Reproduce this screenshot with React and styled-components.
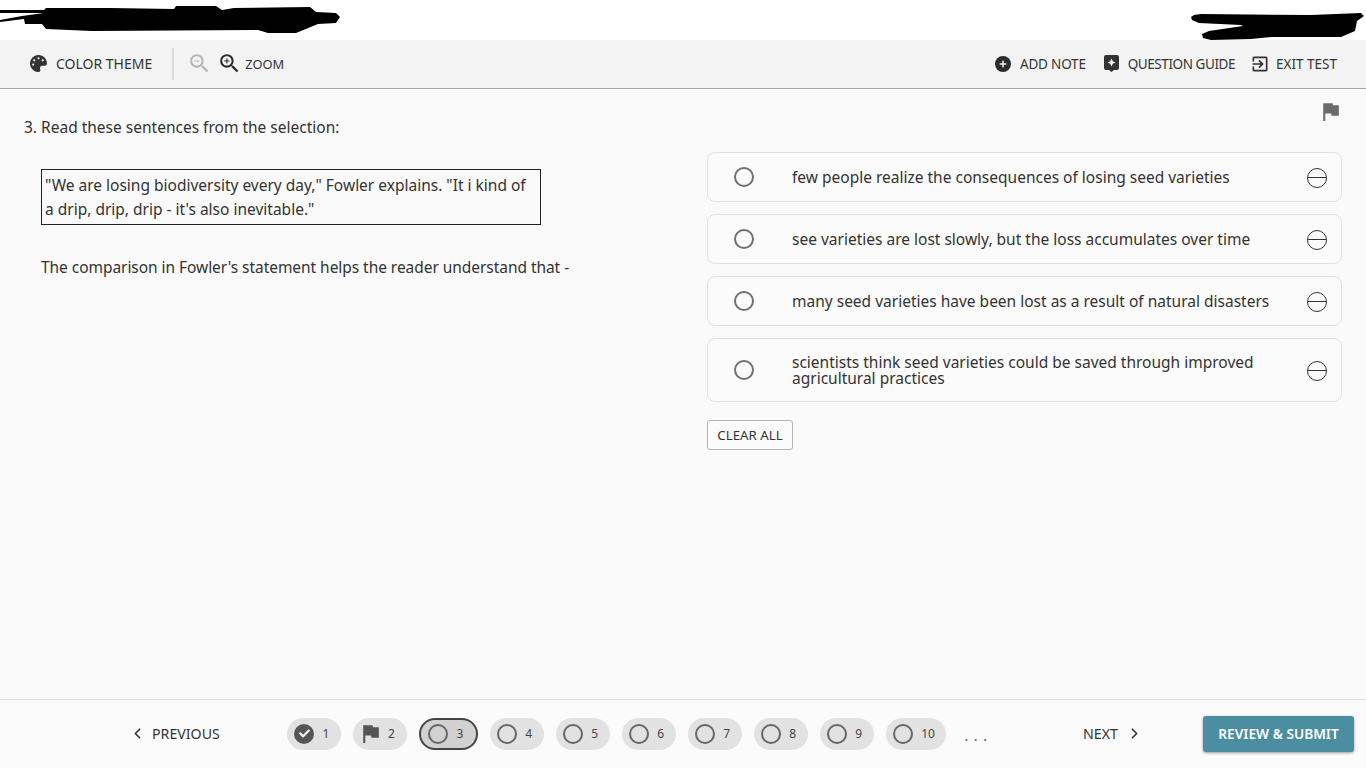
import React from "react";
import styled, { createGlobalStyle } from "styled-components";
import { FaPalette, FaCheck, FaPlus } from "react-icons/fa";
import { MdFlag, MdZoomOut, MdZoomIn, MdOutlineExitToApp } from "react-icons/md";
import { LuChevronLeft, LuChevronRight } from "react-icons/lu";

const GlobalStyle = createGlobalStyle`
	* {
		box-sizing: border-box;
	}
	html, body {
		margin: 0;
		padding: 0;
		background: #fafafa;
		color: #333;
		font-family: "Noto Sans", "Open Sans", sans-serif;
	}
`;

const options = [
	"few people realize the consequences of losing seed varieties",
	"see varieties are lost slowly, but the loss accumulates over time",
	"many seed varieties have been lost as a result of natural disasters",
	"scientists think seed varieties could be saved through improved agricultural practices",
];

const steps = [
	{ n: 1, state: "done" },
	{ n: 2, state: "flag" },
	{ n: 3, state: "current" },
	{ n: 4 },
	{ n: 5 },
	{ n: 6 },
	{ n: 7 },
	{ n: 8 },
	{ n: 9 },
	{ n: 10 },
];

const Scribble = ({ width, height, d }) => (
	<svg width={width} height={height} viewBox={`0 0 ${width} ${height}`} aria-hidden='true'>
		<path d={d} fill='#000' />
	</svg>
);

const App = () => {
	return (
		<Page>
			<GlobalStyle />
			<Header>
				<Scribble
					width={342}
					height={34}
					d='M0 10 L44 10 L46 8 L110 8 L174 9 L176 6 L216 6 L222 10 L234 8 L310 7 L316 12 L336 13 L340 17 L336 23 L318 24 L296 33 L268 33 L258 30 L92 31 L46 29 L42 24 L25 24 L24 19 L0 22 L0 20 L22 16 L44 13 L0 13 Z'
				/>
				<Scribble
					width={173}
					height={40}
					d='M3 15 L10 14 L120 15 L170 13 L173 16 L166 21 L164 31 L150 37 L80 37 L60 39 L20 40 L12 38 L11 34 L18 31 L52 26 L50 25 L8 23 L1 20 L0 17 Z'
				/>
			</Header>
			<Toolbar>
				<ToolGroup>
					<ToolButton>
						<FaPalette size={17} />
						<ToolLabel $size='14px'>COLOR THEME</ToolLabel>
					</ToolButton>
					<Divider />
					<ZoomIcon $muted>
						<MdZoomOut size={25} />
					</ZoomIcon>
					<ZoomIcon>
						<MdZoomIn size={25} />
					</ZoomIcon>
					<ToolLabel $size='12.8px'>ZOOM</ToolLabel>
				</ToolGroup>
				<ToolGroup>
					<ToolButton>
						<RoundIcon>
							<FaPlus size={8} />
						</RoundIcon>
						<ToolLabel $spacing='-0.2px'>ADD NOTE</ToolLabel>
					</ToolButton>
					<ToolButton $left='18px'>
						<svg width='15' height='17' viewBox='0 0 15 17' aria-hidden='true'>
							<path
								d='M2 0 H13 a2 2 0 0 1 2 2 V13 a2 2 0 0 1 -2 2 H10 L7.5 17 L5 15 H2 a2 2 0 0 1 -2 -2 V2 a2 2 0 0 1 2 -2 Z'
								fill='#333'
							/>
							<path
								d='M7.5 3.5 L8.8 6.2 L11.5 7.5 L8.8 8.8 L7.5 11.5 L6.2 8.8 L3.5 7.5 L6.2 6.2 Z'
								fill='#f3f3f3'
							/>
						</svg>
						<ToolLabel $spacing='-0.43px'>QUESTION GUIDE</ToolLabel>
					</ToolButton>
					<ToolButton $left='15px' $gap='6px'>
						<MdOutlineExitToApp size={20} />
						<ToolLabel>EXIT TEST</ToolLabel>
					</ToolButton>
				</ToolGroup>
			</Toolbar>
			<Main>
				<FlagMark>
					<MdFlag size={25} />
				</FlagMark>
				<Question>
					<Prompt>3. Read these sentences from the selection:</Prompt>
					<Excerpt>
						"We are losing biodiversity every day," Fowler explains. "It i kind of a drip,
						drip, drip - it's also inevitable."
					</Excerpt>
					<Stem>The comparison in Fowler's statement helps the reader understand that -</Stem>
				</Question>
				<Answers>
					{options.map((text) => (
						<Option key={text}>
							<Radio />
							<OptionText>{text}</OptionText>
							<Eliminate />
						</Option>
					))}
					<ClearButton>CLEAR ALL</ClearButton>
				</Answers>
			</Main>
			<Footer>
				<NavButton>
					<LuChevronLeft size={17} strokeWidth={2.4} />
					<span>PREVIOUS</span>
				</NavButton>
				<Steps>
					{steps.map((step) => (
						<Step key={step.n} $current={step.state === "current"} $flag={step.state === "flag"}>
							{step.state === "done" && (
								<DoneDot>
									<FaCheck size={11} />
								</DoneDot>
							)}
							{step.state === "flag" && <MdFlag size={25} color='#555' />}
							{step.state !== "done" && step.state !== "flag" && <EmptyDot />}
							<StepNumber>{step.n}</StepNumber>
						</Step>
					))}
					<More>. . .</More>
				</Steps>
				<NavButton $next>
					<span>NEXT</span>
					<LuChevronRight size={17} strokeWidth={2.4} />
				</NavButton>
				<SubmitButton>REVIEW &amp; SUBMIT</SubmitButton>
			</Footer>
		</Page>
	);
};

const Page = styled.div`
	width: 1366px;
	height: 768px;
	display: flex;
	flex-direction: column;
	overflow: hidden;
	background: #fafafa;
`;

const Header = styled.header`
	height: 40px;
	flex: none;
	background: #fff;
	display: flex;
	justify-content: space-between;
	align-items: flex-start;
	padding-right: 2px;
	svg {
		display: block;
	}
`;

const Toolbar = styled.div`
	height: 49px;
	flex: none;
	background: #f3f3f3;
	border-bottom: 1px solid #a3a3a3;
	display: flex;
	justify-content: space-between;
	align-items: center;
	padding: 0 29px 1px 30px;
`;

const ToolGroup = styled.div`
	display: flex;
	align-items: center;
`;

const ToolButton = styled.div`
	display: flex;
	align-items: center;
	gap: ${(props) => props.$gap || "9px"};
	margin-left: ${(props) => props.$left || "0"};
	svg {
		color: #333;
		flex: none;
	}
`;

const ToolLabel = styled.span`
	font-size: ${(props) => props.$size || "13.5px"};
	letter-spacing: ${(props) => props.$spacing || "normal"};
	color: #333;
`;

const Divider = styled.div`
	width: 2px;
	height: 32px;
	background: #dcdcdc;
	margin: 0 13px 0 20px;
`;

const ZoomIcon = styled.div`
	display: flex;
	margin-right: ${(props) => (props.$muted ? "5px" : "3px")};
	color: ${(props) => (props.$muted ? "#b5b5b5" : "#2b2b2b")};
`;

const RoundIcon = styled.div`
	width: 16px;
	height: 16px;
	border-radius: 50%;
	background: #2b2b2b;
	display: flex;
	align-items: center;
	justify-content: center;
	svg {
		color: #f3f3f3;
	}
`;

const Main = styled.main`
	flex: 1;
	position: relative;
	display: grid;
	grid-template-columns: 707px 635px;
	padding-top: 63px;
`;

const FlagMark = styled.div`
	position: absolute;
	top: 10px;
	left: 1318px;
	color: #6a6a6a;
`;

const Question = styled.section`
	padding: 0 0 0 24px;
	margin-top: -37px;
	font-size: 15.5px;
	color: #333;
`;

const Prompt = styled.div`
	line-height: 24px;
	margin-bottom: 30px;
`;

const Excerpt = styled.div`
	width: 500px;
	height: 56px;
	margin-left: 17px;
	border: 1px solid #222;
	padding: 3px;
	line-height: 24px;
`;

const Stem = styled.div`
	margin: 30px 0 0 17px;
	line-height: 24px;
	letter-spacing: -0.05px;
`;

const Answers = styled.section`
	display: flex;
	flex-direction: column;
	gap: 12px;
	align-items: flex-start;
`;

const Option = styled.div`
	width: 635px;
	min-height: 50px;
	background: #fbfbfb;
	border: 1px solid #e0e0e0;
	border-radius: 8px;
	display: flex;
	align-items: center;
	padding: 0 14px 0 26px;
`;

const Radio = styled.div`
	width: 20px;
	height: 20px;
	flex: none;
	border: 2px solid #6f6f6f;
	border-radius: 50%;
	margin-right: 38px;
`;

const OptionText = styled.div`
	flex: 1;
	font-size: 15.5px;
	line-height: 16px;
	color: #333;
	padding: 15px 36px 15px 0;
`;

const Eliminate = styled.div`
	position: relative;
	width: 20px;
	height: 20px;
	flex: none;
	margin-top: 1px;
	border: 1.25px solid #333;
	border-radius: 50%;
	&::after {
		content: "";
		position: absolute;
		left: 0;
		right: 0;
		top: 8px;
		height: 1.25px;
		background: #333;
	}
`;

const ClearButton = styled.button`
	width: 86px;
	height: 30px;
	margin-top: 6px;
	padding: 0;
	background: #fbfbfb;
	border: 1px solid #b5b5b5;
	border-radius: 3px;
	font-family: inherit;
	font-size: 13.3px;
	color: #333;
`;

const Footer = styled.footer`
	height: 69px;
	flex: none;
	border-top: 1px solid #dedede;
	background: #fbfbfb;
	display: flex;
	align-items: center;
	padding: 0 0 1px 129px;
`;

const NavButton = styled.div`
	display: flex;
	align-items: center;
	gap: ${(props) => (props.$next ? "8px" : "6px")};
	width: ${(props) => (props.$next ? "120px" : "158px")};
	font-size: 14.2px;
	color: #333;
`;

const Steps = styled.div`
	display: flex;
	align-items: center;
	gap: 12px;
	width: 796px;
`;

const Step = styled.div`
	height: 32px;
	display: flex;
	align-items: center;
	gap: ${(props) => (props.$flag ? "5px" : "8.5px")};
	padding: ${(props) => {
		if (props.$current) return "0 12.5px 0 7px";
		if (props.$flag) return "0 12.1px 0 5px";
		return "0 11.6px 0 7px";
	}};
	border-radius: 16px;
	background: ${(props) => (props.$current ? "#d1d1d1" : "#e2e2e2")};
	border: ${(props) => (props.$current ? "2px solid #444" : "none")};
`;

const EmptyDot = styled.div`
	width: 20px;
	height: 20px;
	flex: none;
	border: 2px solid #666;
	border-radius: 50%;
`;

const DoneDot = styled.div`
	width: 20px;
	height: 20px;
	flex: none;
	border-radius: 50%;
	background: #555;
	color: #f2f2f2;
	display: flex;
	align-items: center;
	justify-content: center;
`;

const StepNumber = styled.span`
	font-size: 12px;
	color: #444;
`;

const More = styled.span`
	font-size: 14px;
	letter-spacing: 1px;
	color: #555;
	margin-left: 6px;
	margin-top: 3px;
`;

const SubmitButton = styled.button`
	width: 151px;
	height: 36px;
	padding: 0;
	background: #4b8ea1;
	border: none;
	border-radius: 3px;
	box-shadow: 0 1px 3px rgba(0, 0, 0, 0.4);
	font-family: inherit;
	font-size: 13.7px;
	font-weight: 600;
	color: #fff;
`;

export default App;
